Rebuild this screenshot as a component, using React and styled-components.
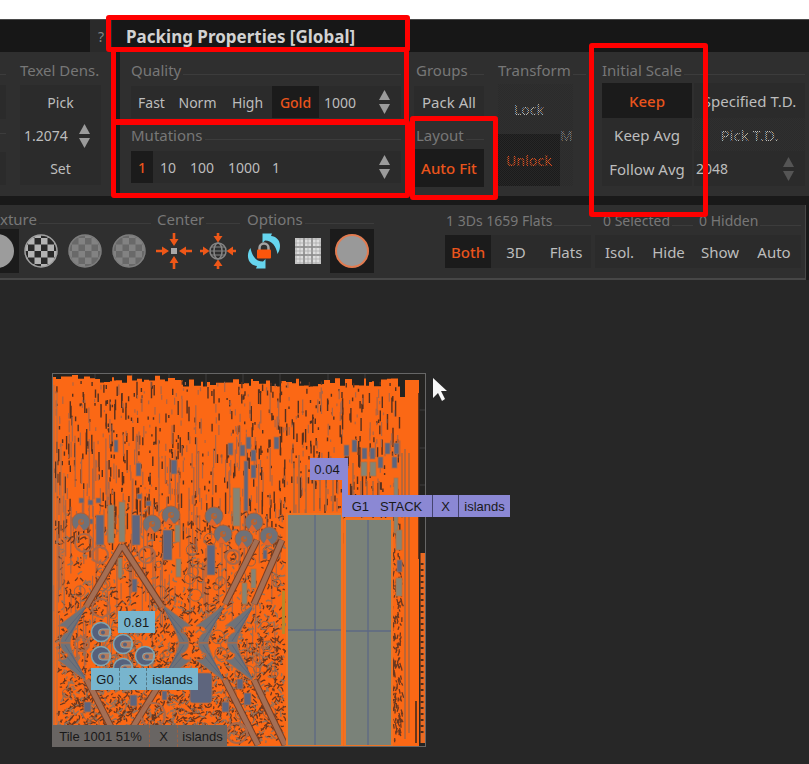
import React from "react";
import styled, { createGlobalStyle, css } from "styled-components";

const c = {
  accent: "#ea541c",
  bar: "#171717",
  panel: "#2f2f2f",
  cell: "#2b2b2b",
  active: "#1b1b1b",
  text: "#bdbdbd",
  muted: "#777777",
  line: "#3c3c3c",
  canvas: "#272727",
  mark: "#ff0000",
};

const GlobalStyle = createGlobalStyle`
  * { box-sizing: border-box; }
  html, body, #root { height: 100%; }
  body {
    margin: 0;
    background: #ffffff;
    font-family: "Noto Sans", "Open Sans", sans-serif;
    font-size: 14px;
    color: ${c.text};
  }
  button, input { font: inherit; color: inherit; }
  h1, h2 { margin: 0; font-weight: 400; }
`;

const Page = styled.main`
  position: relative;
  display: flex;
  flex-direction: column;
  min-height: 100vh;
  padding-top: 19px;
  overflow: hidden;
`;

const TitleBar = styled.header`
  display: flex;
  align-items: center;
  height: 33px;
  background: ${c.bar};
  border-top: 1px solid #4a4a4a;
`;

const BarSpace = styled.div`
  width: 90px;
`;

const HelpButton = styled.button`
  align-self: stretch;
  width: 22px;
  padding: 0;
  border: 0;
  background: #2a2a2a;
  color: #858585;
`;

const Title = styled.h1`
  margin-left: 14px;
  padding-top: 2px;
  font-size: 17px;
  line-height: 24px;
  font-weight: 700;
  color: #d2d2d2;
`;

const Properties = styled.section`
  display: flex;
  height: 144px;
  padding: 8px 4px 0 0;
  background: ${c.panel};
`;

const Column = styled.div`
  flex: ${(p) => (p.$grow ? "1 0 auto" : "0 0 auto")};
  width: ${(p) => p.$w}px;
  margin-right: ${(p) => p.$gap || 0}px;
  font-size: ${(p) => p.$size || 14}px;
`;

const Rule = styled.div`
  width: 4px;
  margin: -8px 11px 0 15px;
  background: #161c1d;
`;

const Heading = styled.h2`
  display: flex;
  align-items: center;
  gap: 2px;
  height: 20px;
  padding-left: ${(p) => p.$inset || 0}px;
  font-size: ${(p) => p.$size || 15}px;
  line-height: 20px;
  white-space: nowrap;
  color: ${c.muted};
  &::after {
    content: "";
    flex: 1;
    height: 1px;
    margin-top: 8px;
    background: ${c.line};
  }
`;

const Row = styled.div`
  display: grid;
  grid-template-columns: ${(p) => p.$cols || "minmax(0, 1fr)"};
  height: ${(p) => p.$h || 33}px;
  margin-top: ${(p) => p.$top || 0}px;
`;

const dither = css`
  position: relative;
  &::after {
    content: "";
    position: absolute;
    inset: 0;
    background: repeating-conic-gradient(${(p) => (p.$on ? "#262626" : c.panel)} 0 25%, transparent 0 50%) 0 0 / 2px 2px;
  }
`;

const Tool = styled.button`
  min-width: 0;
  height: 100%;
  padding: 0;
  border: 0;
  white-space: nowrap;
  background: ${(p) => (p.$on ? c.active : c.cell)};
  color: ${(p) => (p.$on ? c.accent : p.$dim ? "#868686" : c.text)};
  font-weight: ${(p) => (p.$on ? 500 : 400)};
  ${(p) => p.disabled && dither}
`;

const NumberField = styled.label`
  display: flex;
  align-items: center;
  min-width: 0;
  height: 100%;
  padding: 0 11px 0 ${(p) => p.$inset}px;
  background: ${c.cell};
  font-size: 14px;
`;

const NumberInput = styled.input`
  flex: 1;
  width: 20px;
  min-width: 0;
  padding: 0;
  border: 0;
  outline: 0;
  background: transparent;
`;

const Stepper = styled.span`
  display: flex;
  flex-direction: column;
  gap: 4px;
`;

const Step = styled.button`
  display: block;
  width: 11px;
  height: 10px;
  padding: 0;
  border: 0;
  background: transparent;
  color: ${(p) => (p.$dim ? "#555555" : "#9b9b9b")};
  svg { display: block; }
`;

const TransformGrid = styled.div`
  display: grid;
  grid-template-columns: 62px 26px;
  grid-template-rows: 50px 52px;
  margin-top: 4px;
`;

const AxisCell = styled.div`
  grid-column: 2;
  grid-row: 1 / 3;
`;

const ScaleGrid = styled.div`
  display: grid;
  grid-template-columns: 90px 1fr;
  grid-template-rows: 35px 33px 35px;
  column-gap: 2px;
  margin-top: 3px;
`;

const BarFrame = styled.div`
  padding-top: 9px;
  background: #191919;
`;

const ViewBar = styled.section`
  display: flex;
  height: 75px;
  margin-right: 3px;
  border: solid #474747;
  border-width: 0 1px 2px 0;
  background: ${c.panel};
  overflow: hidden;
`;

const IconSection = styled.div`
  flex: none;
  padding-top: 4px;
  margin-left: ${(p) => p.$shift || 0}px;
`;

const IconRow = styled.div`
  display: flex;
`;

const IconButton = styled.button`
  display: grid;
  place-items: center;
  width: 44px;
  height: 44px;
  padding: 0;
  border: 0;
  background: ${(p) => (p.$on ? c.active : "transparent")};
`;

const FilterGroup = styled.div`
  display: flex;
  margin-left: auto;
  padding: 6px 4px 0 0;
`;

const Filter = styled.div`
  width: ${(p) => p.$w}px;
  margin-right: ${(p) => p.$gap || 0}px;
  font-size: 15px;
`;

const Viewport = styled.section`
  flex: 1;
  padding: 93px 0 17px 52px;
  background: ${c.canvas};
`;

const Tile = styled.div`
  position: relative;
  width: 374px;
  & > svg { display: block; }
`;

const Tag = styled.div`
  position: absolute;
  left: ${(p) => p.$x}px;
  top: ${(p) => p.$y}px;
  display: flex;
  height: 22px;
  background: ${(p) => p.$bg};
  color: #191919;
  font-family: "Liberation Sans", Arial, sans-serif;
  font-size: 13px;
  line-height: 23px;
  white-space: pre;
`;

const TagCell = styled.span`
  width: ${(p) => p.$w}px;
  text-align: center;
  border-left: ${(p) => (p.$edge ? `1px ${p.$dash ? "dashed" : "solid"} ${p.$edge}` : "0")};
`;

const Stem = styled.div`
  position: absolute;
  left: 290px;
  top: 85px;
  width: 6px;
  height: 40px;
  background: #8b88d4;
`;

const Pointer = styled.svg`
  position: absolute;
  left: 379px;
  top: 3px;
`;

const Callout = styled.div`
  position: absolute;
  left: ${(p) => p.$x}px;
  top: ${(p) => p.$y}px;
  width: ${(p) => p.$w}px;
  height: ${(p) => p.$h}px;
  border: 5px solid ${c.mark};
  border-radius: 3px;
  pointer-events: none;
`;

function Spin({ name, dim }) {
  return (
    <Stepper>
      <Step $dim={dim} aria-label={`Increase ${name}`}>
        <svg width="11" height="10"><path d="M5.5 0 11 10H0Z" fill="currentColor" /></svg>
      </Step>
      <Step $dim={dim} aria-label={`Decrease ${name}`}>
        <svg width="11" height="10"><path d="M0 0H11L5.5 10Z" fill="currentColor" /></svg>
      </Step>
    </Stepper>
  );
}

function Field({ name, value, inset, dim }) {
  return (
    <NumberField $inset={inset}>
      <NumberInput aria-label={name} defaultValue={value} />
      <Spin name={name} dim={dim} />
    </NumberField>
  );
}

function Checker({ id, a, b, ring }) {
  return (
    <svg width="36" height="36" viewBox="0 0 36 36">
      <defs>
        <pattern id={id} width="13" height="13" x="5" y="5" patternUnits="userSpaceOnUse">
          <rect width="13" height="13" fill={b} />
          <path d="M0 0h6.500v6.500H0zM6.500 6.500H13V13H6.500z" fill={a} />
        </pattern>
      </defs>
      <circle cx="18" cy="18" r="16" fill={`url(#${id})`} stroke={ring} strokeWidth="1.5" />
    </svg>
  );
}

const ARROW = "M16.700 0h2.600v6h3.200L18 13 13.500 6h3.200Z";
const SHORT_ARROW = "M16.700 0h2.600v3h3.200L18 9.500 13.500 3h3.200Z";

function CenterIcon({ globe }) {
  return (
    <svg width="36" height="36" viewBox="0 0 36 36">
      {[0, 90, 180, 270].map((r) => (
        <path key={r} d={globe ? SHORT_ARROW : ARROW} fill="#ee5718" transform={`rotate(${r} 18 18)`} />
      ))}
      {globe ? (
        <g fill="none" stroke="#858585" strokeWidth="1.5">
          <circle cx="18" cy="18" r="8" />
          <ellipse cx="18" cy="18" rx="4" ry="8" />
          <path d="M10 18h16M11 14h14M11 22h14" strokeWidth="1" />
        </g>
      ) : (
        <rect x="15" y="15" width="6" height="6" fill="#a8a8a8" />
      )}
    </svg>
  );
}

const CYCLE = "M4.500 15C0 21 1 32 11 33L10 35.500H19.500V26L17 28.500C10 28.500 6 23 4.500 15Z";

function LockCycleIcon() {
  return (
    <svg width="36" height="36" viewBox="0 0 36 36">
      <path d={CYCLE} fill="#66d5ee" />
      <path d={CYCLE} fill="#66d5ee" transform="rotate(180 18 18)" />
      <path d="M13.500 18v-3a4.500 4.500 0 0 1 9 0v3" fill="none" stroke="#a4a4a4" strokeWidth="2.500" />
      <rect x="11" y="16.500" width="14" height="9" rx="1" fill="#fb560c" />
    </svg>
  );
}

function GridIcon() {
  const steps = [0, 1, 2];
  return (
    <svg width="26" height="26" viewBox="0 0 26 26">
      <rect width="26" height="26" fill="#c4c4c4" />
      {steps.flatMap((y) =>
        steps.map((x) => (
          <rect key={`${x}-${y}`} x={2 + x * 8} y={2 + y * 8} width="6" height="6" fill="#dedede" />
        ))
      )}
      <path d="M9 0v26M17 0v26M0 9h26M0 17h26" stroke="#8a8a8a" strokeWidth="1.500" />
      <path d="M5 0v26M13 0v26M21 0v26M0 5h26M0 13h26M0 21h26" stroke="#a6a6a6" strokeWidth=".7" />
    </svg>
  );
}

function makeRandom(seed) {
  let s = seed;
  return () => {
    s = (s * 1664525 + 1013904223) % 4294967296;
    return s / 4294967296;
  };
}

/* Packed shells: long strips in the upper half, small mixed pieces below. */
function buildShells() {
  const r = makeRandom(77);
  const n = (v) => Math.round(v * 10) / 10;
  let top = "M1 373V3";
  for (let x = 1; x < 348; ) {
    const w = 2 + Math.floor(r() * 6);
    const y = x > 125 ? 5 + r() * 9 : 2 + r() * 8;
    top += `V${n(y)}H${Math.min(348, x + w)}`;
    x += w;
  }
  top += "V24H353V7H367V373Z";

  let strips = "";
  let seams = "";
  for (let i = 0; i < 1000; i++) {
    const x = 3 + r() * 345;
    const y = 8 + r() * 160;
    const len = 2 + r() * r() * 22;
    const part = `M${n(x)} ${n(y)}v${n(len)}`;
    if (r() < 0.6) strips += part;
    else seams += part;
  }
  for (let i = 0; i < 150; i++) {
    seams += `M${n(r() * 232)} ${n(55 + r() * 220)}v${n(15 + r() * 45)}`;
  }
  let specks = "";
  let pieces = "";
  for (let i = 0; i < 2900; i++) {
    const x = 6 + r() * 226;
    const y = 125 + Math.sqrt(r()) * 243;
    const a = r() * Math.PI;
    const len = 1.5 + r() * 4;
    const dx = Math.cos(a) * len;
    const dy = Math.sin(a) * len;
    const part = `M${n(x)} ${n(y)}q${n(dy / 2)} ${n(dx / 2)} ${n(dx)} ${n(dy)}`;
    if (r() < 0.68) specks += part;
    else pieces += part;
  }
  for (let i = 0; i < 180; i++) {
    specks += `M${n(340 + r() * 10)} ${n(155 + r() * 214)}l${n(r() * 4 - 2)} ${n(2 + r() * 4)}`;
  }
  const rings = [];
  for (let i = 0; i < 75; i++) {
    rings.push([n(12 + r() * 215), n(155 + r() * 210), n(2 + r() * 5)]);
  }
  return { top, strips, seams, specks, pieces, rings };
}

const shells = buildShells();

const BLUE_BLOCKS = [
  [44, 142, 8, 30], [80, 142, 8, 30], [111, 157, 9, 30], [155, 172, 8, 30],
  [62, 67, 4, 12], [84, 90, 5, 13], [119, 87, 6, 14], [176, 70, 5, 12],
  [194, 64, 5, 12], [188, 72, 5, 11], [222, 64, 5, 12], [199, 77, 5, 11], [199, 92, 5, 13],
  [292, 72, 5, 11], [300, 67, 5, 12], [310, 75, 5, 11], [318, 75, 5, 11], [333, 70, 5, 11],
  [342, 70, 5, 11], [326, 84, 5, 11], [340, 84, 5, 11], [192, 88, 4, 50],
  [27, 125, 5, 5], [36, 127, 5, 5], [44, 125, 5, 5], [85, 121, 5, 5], [94, 128, 5, 5],
  [27, 144, 5, 5], [36, 146, 5, 5], [94, 147, 5, 5],
  [80, 206, 5, 13], [78, 322, 7, 11], [32, 329, 7, 10], [170, 329, 7, 10], [185, 306, 6, 10],
  [192, 320, 7, 12], [110, 318, 5, 9], [345, 187, 5, 12], [211, 177, 4, 9],
];

const GREEN_BLOCKS = [
  [56, 132, 6, 38], [67, 129, 6, 40], [181, 115, 7, 38], [123, 152, 5, 17],
  [309, 89, 6, 14], [318, 89, 6, 14], [66, 185, 4, 20], [124, 186, 5, 18],
  [190, 210, 5, 21], [199, 196, 5, 19], [342, 105, 4, 55], [344, 205, 6, 18], [344, 157, 6, 20],
];

const DISCS = [[29, 149], [100, 151], [119, 142], [162, 143], [171, 161], [202, 149], [192, 166], [217, 163]];
const STACK_DISCS = [[49, 259], [71, 271], [49, 283], [71, 295], [93, 283]];
const HUBS = [[13, 1], [132, -1], [151, 1], [180, 1]];
const KITE = "M22-39L-7-17Q4-17 3-11Q-4-9-5 0H5Q6-9 22-39Z";
const KITE_FOLD = "M20-35L2-14M16-27L0-2M20-35L6-10";

const BRACES = [
  "M70 172L34 234", "M70 172L110 234", "M35 307L59 354", "M110 307L81 354",
  "M205 167L173 231", "M230 167L202 231", "M173 307L206 372", "M202 307L233 372",
];

function UvTile() {
  return (
    <svg width="374" height="374" viewBox="0 0 374 374" aria-label="Packed islands" role="img">
      <rect width="374" height="374" fill="#242321" />
      <path d="M43 0v20M80 0v20M117 0v20M154 0v20M191 0v20M228 0v20M276 0v20M313 0v20M366 37h8M366 75h8M366 112h8" stroke="#3c3c3c" />
      <path d={shells.top} fill="#fb6815" />
      <path d={shells.strips} stroke="#55301f" strokeWidth="1.4" fill="none" />
      <path d={shells.seams} stroke="#ab6546" strokeWidth="1.2" fill="none" />
      <path d={shells.specks} stroke="#6a3820" strokeWidth="1.3" fill="none" />
      <path d={shells.pieces} stroke="#93715d" strokeWidth="1.5" fill="none" />
      <g fill="none" stroke="#92664e" strokeWidth="1">
        {shells.rings.map(([x, y, r], i) => <circle key={i} cx={x} cy={y} r={r} />)}
      </g>
      <path d="M2 12V360M5 20V350M9 70V220M12 100V240" stroke="#ad714f" strokeWidth="1" />
      <path d="M242 90v50M247 82v58M254 92v48M262 106v32M268 106v32M274 106v32M281 106v32M301 90v45M309 108v28M315 108v28M321 108v28M327 108v28M350 80v65M353 76v290M357 80v280" stroke="#a8653f" strokeWidth="1.500" />
      <path d="M371 180v190" stroke="#e96a22" strokeWidth="5" />
      <path d="M367 20v166M364 328v42" stroke="#37261d" strokeWidth="1.500" />
      <path d="M370 190v170" stroke="#4a2d1d" strokeWidth="3" strokeDasharray="2 4" />
      <g fill="none" stroke="#7a3d20" strokeWidth="7">
        {BRACES.map((d) => <path key={d} d={d} />)}
      </g>
      <g fill="none" stroke="#a46e54" strokeWidth="5">
        {BRACES.map((d) => <path key={d} d={d} />)}
      </g>
      {HUBS.map(([x, dir]) => (
        <g key={x} transform={`translate(${x} 270)`}>
          {[1, -1].map((flip) => (
            <g key={flip} transform={`scale(${dir} ${flip})`}>
              <path d={KITE} fill="#6f7278" stroke="#b36a43" />
              <path d={KITE_FOLD} fill="none" stroke="#5c667a" />
            </g>
          ))}
        </g>
      ))}
      <g fill="#5e657d" stroke="#b76b41" strokeWidth=".8">
        {BLUE_BLOCKS.map(([x, y, w, h]) => <rect key={`${x}-${y}`} x={x} y={y} width={w} height={h} />)}
        <rect x="138" y="300" width="22" height="30" rx="3" />
      </g>
      <g fill="#858474" stroke="#b77040" strokeWidth=".8">
        {GREEN_BLOCKS.map(([x, y, w, h]) => <rect key={`${x}-${y}`} x={x} y={y} width={w} height={h} />)}
      </g>
      {DISCS.map(([x, y]) => (
        <g key={`${x}-${y}`} transform={`translate(${x} ${y})`}>
          <circle r="9" fill="#6f7178" stroke="#a8603a" />
          <path d="M-2 2L-6 9H3Z" fill="#e0642a" />
          <circle r="3" fill="#b9622f" />
          <circle cx="1" cy="-1" r="1.500" fill="#777477" />
        </g>
      ))}
      <g fill="none" stroke="#a8684b" strokeWidth="2">
        <circle cx="32" cy="170" r="9" /><circle cx="95" cy="182" r="8" /><circle cx="48" cy="182" r="8" />
        <circle cx="181" cy="184" r="7" /><circle cx="101" cy="342" r="12" /><circle cx="30" cy="271" r="7" />
        <circle cx="185" cy="360" r="10" /><circle cx="49" cy="235" r="9" />
      </g>
      <rect x="230" y="218" width="3" height="43" fill="#b88929" />
      <path d="M235 141H290V373H235ZM293 146H340V373H293Z" fill="#7a8279" stroke="#ed7424" strokeWidth="2" />
      <path d="M263 142V372M236 257H289M316 147V372M294 258H339" stroke="#5d6984" strokeWidth="1.300" />
      {STACK_DISCS.map(([x, y]) => (
        <g key={`${x}-${y}`} transform={`translate(${x} ${y})`}>
          <circle r="9.500" fill="#56617c" stroke="#80a5af" strokeWidth="1.500" />
          <path d="M9-3H1a3.500 3.500 0 1 0 0 7H8Z" fill="#b37a5c" stroke="#84a8b0" />
          <circle cx="2" cy=".5" r="2" fill="#56617c" />
        </g>
      ))}
      <rect x=".5" y=".5" width="373" height="373" fill="none" stroke="#666666" />
    </svg>
  );
}

export default function App() {
  return (
    <>
      <GlobalStyle />
      <Page>
        <TitleBar>
          <BarSpace />
          <HelpButton aria-label="Help">?</HelpButton>
          <Title>Packing Properties [Global]</Title>
        </TitleBar>

        <Properties>
          <Column $w={6} $gap={14}>
            <Heading />
            <Row $h={34} $top={5}><Tool aria-label="Previous option" /></Row>
            <Row><Heading /></Row>
            <Row><Tool aria-label="Next option" /></Row>
          </Column>
          <Column $w={81}>
            <Heading>Texel Dens.</Heading>
            <Row $h={34} $top={5}><Tool>Pick</Tool></Row>
            <Row><Field name="Texel density" value="1.2074" inset={4} /></Row>
            <Row><Tool>Set</Tool></Row>
          </Column>
          <Rule />

          <Column $w={270} $gap={13}>
            <Heading>Quality</Heading>
            <Row $h={32} $top={6} $cols="41px 51px 49px 47px 1fr">
              <Tool>Fast</Tool>
              <Tool>Norm</Tool>
              <Tool>High</Tool>
              <Tool $on>Gold</Tool>
              <Field name="Quality iterations" value="1000" inset={5} />
            </Row>
            <Row $h={20} $top={7}><Heading>Mutations</Heading></Row>
            <Row $h={32} $top={6} $cols="22px 30px 38px 46px 1fr">
              <Tool $on>1</Tool>
              <Tool>10</Tool>
              <Tool>100</Tool>
              <Tool>1000</Tool>
              <Field name="Mutations" value="1" inset={5} />
            </Row>
          </Column>

          <Column $w={70} $gap={14} $size={15}>
            <Heading $inset={2}>Groups</Heading>
            <Row $h={32} $top={6}><Tool>Pack All</Tool></Row>
            <Row $h={20} $top={7}><Heading $inset={2}>Layout</Heading></Row>
            <Row $h={38} $top={4}><Tool $on>Auto Fit</Tool></Row>
          </Column>

          <Column $w={88} $gap={16}>
            <Heading>Transform</Heading>
            <TransformGrid>
              <Tool disabled>Lock</Tool>
              <AxisCell><Tool disabled $dim>M</Tool></AxisCell>
              <Tool $on disabled>Unlock</Tool>
            </TransformGrid>
          </Column>

          <Column $w={199} $grow $size={15}>
            <Heading>Initial Scale</Heading>
            <ScaleGrid>
              <Tool $on>Keep</Tool>
              <Tool>Specified T.D.</Tool>
              <Tool>Keep Avg</Tool>
              <Tool disabled>Pick T.D.</Tool>
              <Tool>Follow Avg</Tool>
              <Field name="Map size" value="2048" inset={2} dim />
            </ScaleGrid>
          </Column>
        </Properties>

        <BarFrame>
          <ViewBar>
            <IconSection $shift={-25}>
              <Heading $inset={25}>xture</Heading>
              <IconRow>
                <IconButton $on aria-label="Plain">
                  <svg width="36" height="36"><circle cx="18" cy="18" r="17" fill="#9c9c9c" /></svg>
                </IconButton>
                <IconButton aria-label="Checker"><Checker id="ck1" a="#b3b3b3" b="#292929" ring="#a0a0a0" /></IconButton>
                <IconButton aria-label="Soft checker"><Checker id="ck2" a="#696969" b="#828282" ring="#7d7d7d" /></IconButton>
                <IconButton aria-label="Custom checker"><Checker id="ck3" a="#696969" b="#828282" ring="#7d7d7d" /></IconButton>
              </IconRow>
            </IconSection>
            <IconSection $shift={1}>
              <Heading $inset={5}>Center</Heading>
              <IconRow>
                <IconButton aria-label="Center on selection"><CenterIcon /></IconButton>
                <IconButton aria-label="Center on all"><CenterIcon globe /></IconButton>
              </IconRow>
            </IconSection>
            <IconSection $shift={2}>
              <Heading $inset={5}>Options</Heading>
              <IconRow>
                <IconButton aria-label="Auto update lock"><LockCycleIcon /></IconButton>
                <IconButton aria-label="Grid"><GridIcon /></IconButton>
                <IconButton $on aria-label="Outline">
                  <svg width="36" height="36"><circle cx="18" cy="18" r="16" fill="#999999" stroke="#e27b50" strokeWidth="2" /></svg>
                </IconButton>
              </IconRow>
            </IconSection>

            <FilterGroup>
              <Filter $w={146} $gap={4}>
                <Heading $inset={1} $size={14}>1 3Ds 1659 Flats</Heading>
                <Row $h={33} $top={4} $cols="46px 50px 50px">
                  <Tool $on>Both</Tool><Tool>3D</Tool><Tool>Flats</Tool>
                </Row>
              </Filter>
              <Filter $w={98}>
                <Heading $inset={8} $size={14}>0 Selected</Heading>
                <Row $h={33} $top={4} $cols="1fr 1fr"><Tool>Isol.</Tool><Tool>Hide</Tool></Row>
              </Filter>
              <Filter $w={108}>
                <Heading $inset={6} $size={14}>0 Hidden</Heading>
                <Row $h={33} $top={4} $cols="1fr 1fr"><Tool>Show</Tool><Tool>Auto</Tool></Row>
              </Filter>
            </FilterGroup>
          </ViewBar>
        </BarFrame>

        <Viewport>
          <Tile>
            <UvTile />
            <Stem />
            <Tag $x={258} $y={85} $bg="#8b88d4"><TagCell $w={34}>0.04</TagCell></Tag>
            <Tag $x={290} $y={122} $bg="#8b88d4">
              <TagCell $w={90}>{"G1   STACK"}</TagCell>
              <TagCell $w={26} $edge="#45456f">X</TagCell>
              <TagCell $w={52} $edge="#45456f">islands</TagCell>
            </Tag>
            <Tag $x={66} $y={238} $bg="#78b5ce"><TagCell $w={37}>0.81</TagCell></Tag>
            <Tag $x={39} $y={295} $bg="#78b5ce">
              <TagCell $w={28}>G0</TagCell>
              <TagCell $w={27} $edge="#527784" $dash>X</TagCell>
              <TagCell $w={52} $edge="#527784" $dash>islands</TagCell>
            </Tag>
            <Tag $x={0} $y={352} $bg="#696563">
              <TagCell $w={97}>Tile 1001 51%</TagCell>
              <TagCell $w={28} $edge="#9a6042" $dash>X</TagCell>
              <TagCell $w={50} $edge="#9a6042" $dash>islands</TagCell>
            </Tag>
            <Pointer width="18" height="29" viewBox="0 0 18 29">
              <path d="M2 2V22L7 17 11 25 14 23 10 15H16Z" fill="#f7f7f7" />
            </Pointer>
          </Tile>
        </Viewport>

        <Callout $x={106} $y={15} $w={304} $h={37} />
        <Callout $x={111} $y={47} $w={298} $h={77} />
        <Callout $x={111} $y={120} $w={299} $h={78} />
        <Callout $x={410} $y={116} $w={88} $h={84} />
        <Callout $x={589} $y={43} $w={119} $h={174} />
      </Page>
    </>
  );
}
